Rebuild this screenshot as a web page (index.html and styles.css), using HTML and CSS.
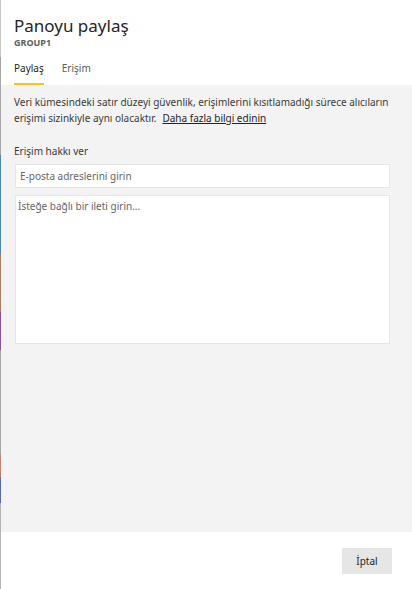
FILE: index.html
```html
<!DOCTYPE html>
<html lang="tr">

<head>
    <meta charset="UTF-8">
    <meta name="viewport" content="width=device-width, initial-scale=1.0">
    <title>Panoyu paylaş</title>
    <link rel="stylesheet" href="styles.css">
</head>

<body>
    <!-- the report behind the pane shows through on the far left -->
    <div class="backdrop"></div>

    <div class="pane">
        <div class="pane-head">
            <h1 class="title">Panoyu paylaş</h1>
            <div class="subtitle">GROUP1</div>
            <div class="tabs">
                <span class="tab active">Paylaş</span>
                <span class="tab">Erişim</span>
            </div>
        </div>

        <div class="pane-body">
            <div class="note">
                <span>Veri kümesindeki satır düzeyi güvenlik, erişimlerini kısıtlamadığı sürece alıcıların</span>
                <span class="note-row">
                    <span>erişimi sizinkiyle aynı olacaktır.</span>
                    <a href="#" class="more">Daha fazla bilgi edinin</a>
                </span>
            </div>

            <label class="field-label">Erişim hakkı ver</label>
            <input class="email" type="text" placeholder="E-posta adreslerini girin">
            <textarea class="message" placeholder="İsteğe bağlı bir ileti girin..."></textarea>
        </div>

        <div class="pane-foot">
            <button class="cancel">İptal</button>
        </div>
    </div>
</body>

</html>
```

FILE: styles.css
```css
html, body {
    height: 100%;
}

body {
    margin: 0;
    padding: 0;
    display: flex;
    font-family: 'Noto Sans', 'Segoe UI', sans-serif;
    color: #252423;
    background: #fff;
}

.backdrop {
    width: 1px;
    flex-shrink: 0;
    background: linear-gradient(to bottom,
        #c6c6c6 0, #c6c6c6 57px,
        #a6a6a6 57px, #a6a6a6 155px,
        #4a86c6 155px, #4a86c6 253px,
        #b07a66 253px, #b07a66 312px,
        #8a52a2 312px, #8a52a2 350px,
        #a6a6a6 350px, #a6a6a6 455px,
        #c2826c 455px, #c2826c 477px,
        #5b68b0 477px, #5b68b0 503px,
        #b4b4b4 503px);
}

.pane {
    flex: 1;
    display: flex;
    flex-direction: column;
    min-width: 0;
}

.pane-head {
    padding: 14px 13px 0;
    background: #fff;
}

.title {
    margin: 0;
    font-size: 17px;
    font-weight: 400;
    line-height: 24px;
}

.subtitle {
    font-size: 9px;
    font-weight: 700;
    color: #605e5c;
    line-height: 10px;
}

.tabs {
    display: flex;
    gap: 18px;
    margin-top: 12px;
}

.tab {
    font-size: 10px;
    line-height: 16px;
    padding-bottom: 7px;
    color: #605e5c;
    border-bottom: 2px solid transparent;
}

.tab.active {
    color: #252423;
    border-bottom-color: #f2c811;
}

.pane-body {
    flex: 1;
    background: #f3f3f3;
    padding: 9px 22px 0 13px;
    display: flex;
    flex-direction: column;
}

.note {
    display: flex;
    flex-direction: column;
    font-size: 10px;
    line-height: 16px;
    color: #3b3a39;
}

.note-row {
    display: flex;
    gap: 6px;
}

.more {
    color: #252423;
}

.field-label {
    margin-top: 18px;
    font-size: 10px;
    line-height: 14px;
    color: #3b3a39;
}

.email,
.message {
    font-family: inherit;
    font-size: 10px;
    color: #252423;
    background: #fff;
    border: 1px solid #e6e6e6;
    outline: none;
    margin: 0 0 0 1px;
}

.email {
    margin-top: 6px;
    height: 24px;
    box-sizing: border-box;
    padding: 0 4px;
}

.message {
    margin-top: 7px;
    height: 149px;
    box-sizing: border-box;
    padding: 3px 2px;
    resize: none;
}

.email::placeholder,
.message::placeholder {
    color: #666;
}

.pane-foot {
    height: 57px;
    display: flex;
    justify-content: flex-end;
    align-items: center;
    padding-right: 20px;
    background: #fff;
}

.cancel {
    width: 50px;
    height: 26px;
    border: none;
    background: #e6e6e6;
    font-family: inherit;
    font-size: 10px;
    color: #252423;
    padding: 0;
}
```
